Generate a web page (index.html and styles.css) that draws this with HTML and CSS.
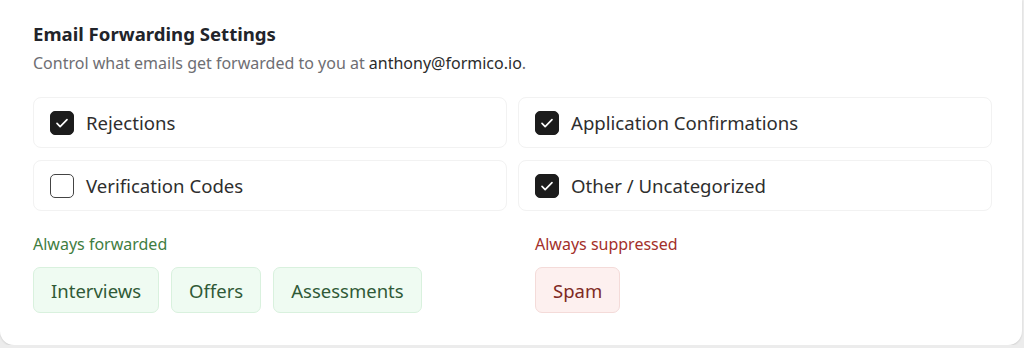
FILE: index.html
```html
<!DOCTYPE html>
<html>
<head>
	<meta charset="utf-8">
	<meta name="viewport" content="width=device-width, initial-scale=1">
	<title>Email Forwarding Settings</title>
	<link rel="stylesheet" href="styles.css">
</head>
<body>
   <div class="card">
      <h2 class="title">Email Forwarding Settings</h2>
      <p class="subtitle">Control what emails get forwarded to you at <span class="email">anthony@formico.io</span>.</p>

      <div class="options">
         <label class="option">
            <span class="box checked">
               <svg viewBox="0 0 24 24" width="20" height="20"><path d="M6 12.5l3.8 3.8L18 8" fill="none" stroke="#fff" stroke-width="2" stroke-linecap="round" stroke-linejoin="round"/></svg>
            </span>
            <span class="option-text">Rejections</span>
         </label>
         <label class="option">
            <span class="box checked">
               <svg viewBox="0 0 24 24" width="20" height="20"><path d="M6 12.5l3.8 3.8L18 8" fill="none" stroke="#fff" stroke-width="2" stroke-linecap="round" stroke-linejoin="round"/></svg>
            </span>
            <span class="option-text">Application Confirmations</span>
         </label>
         <label class="option">
            <span class="box"></span>
            <span class="option-text">Verification Codes</span>
         </label>
         <label class="option">
            <span class="box checked">
               <svg viewBox="0 0 24 24" width="20" height="20"><path d="M6 12.5l3.8 3.8L18 8" fill="none" stroke="#fff" stroke-width="2" stroke-linecap="round" stroke-linejoin="round"/></svg>
            </span>
            <span class="option-text">Other / Uncategorized</span>
         </label>
      </div>

      <div class="fixed">
         <div class="group">
            <div class="group-label forwarded">Always forwarded</div>
            <div class="chips">
               <span class="chip green">Interviews</span>
               <span class="chip green">Offers</span>
               <span class="chip green">Assessments</span>
            </div>
         </div>
         <div class="group">
            <div class="group-label suppressed">Always suppressed</div>
            <div class="chips">
               <span class="chip red">Spam</span>
            </div>
         </div>
      </div>
   </div>
</body>
</html>
```

FILE: styles.css
```css
 body{
    margin: 0;
    padding: 0;
    background-color: #ececec;
    font-family: "Noto Sans", "Open Sans", sans-serif;
    color: #2b2b2b;
 }

 .card{
    width: 1022px;
    height: 345px;
    box-sizing: border-box;
    background-color: #fff;
    border-radius: 0 0 14px 14px;
    box-shadow: 0 1px 2px rgba(0, 0, 0, 0.12);
    padding: 21px 30px 0 33px;
 }

 .title{
    font-size: 18.6px;
    font-weight: 700;
    color: #22242a;
    margin: 0;
    line-height: 26px;
 }

 .subtitle{
    font-size: 16px;
    color: #6e6e73;
    margin: 5px 0 0 0;
    line-height: 22px;
 }

 .email{
    color: #2b2b2b;
 }

 .options{
    display: grid;
    grid-template-columns: 474px 474px;
    gap: 12px 11px;
    margin-top: 23px;
 }

 .option{
    display: flex;
    align-items: center;
    gap: 12px;
    height: 51px;
    box-sizing: border-box;
    padding-left: 16px;
    border: 1px solid #f2f2f2;
    border-radius: 8px;
 }

 .box{
    width: 24px;
    height: 24px;
    box-sizing: border-box;
    border: 1.5px solid #444;
    border-radius: 5px;
    display: flex;
    align-items: center;
    justify-content: center;
 }

 .box.checked{
    background-color: #1c1c1c;
    border-color: #1c1c1c;
 }

 .option-text{
    font-size: 18.6px;
    color: #2e2e2e;
 }

 .fixed{
    display: grid;
    grid-template-columns: 502px 1fr;
    margin-top: 21px;
 }

 .group-label{
    font-size: 16px;
    line-height: 24px;
 }

 .forwarded{
    color: #3f7d3f;
 }

 .suppressed{
    color: #a3302a;
 }

 .chips{
    display: flex;
    gap: 12px;
    margin-top: 11px;
 }

 .chip{
    height: 46px;
    box-sizing: border-box;
    display: flex;
    align-items: center;
    padding: 0 17px;
    font-size: 18.5px;
    border-radius: 7px;
    border: 1px solid;
 }

 .chip.green{
    background-color: #effbf2;
    border-color: #d9f1de;
    color: #2f5a37;
 }

 .chip.red{
    background-color: #fdf0ef;
    border-color: #f4dbd9;
    color: #7f2a24;
 }
```
